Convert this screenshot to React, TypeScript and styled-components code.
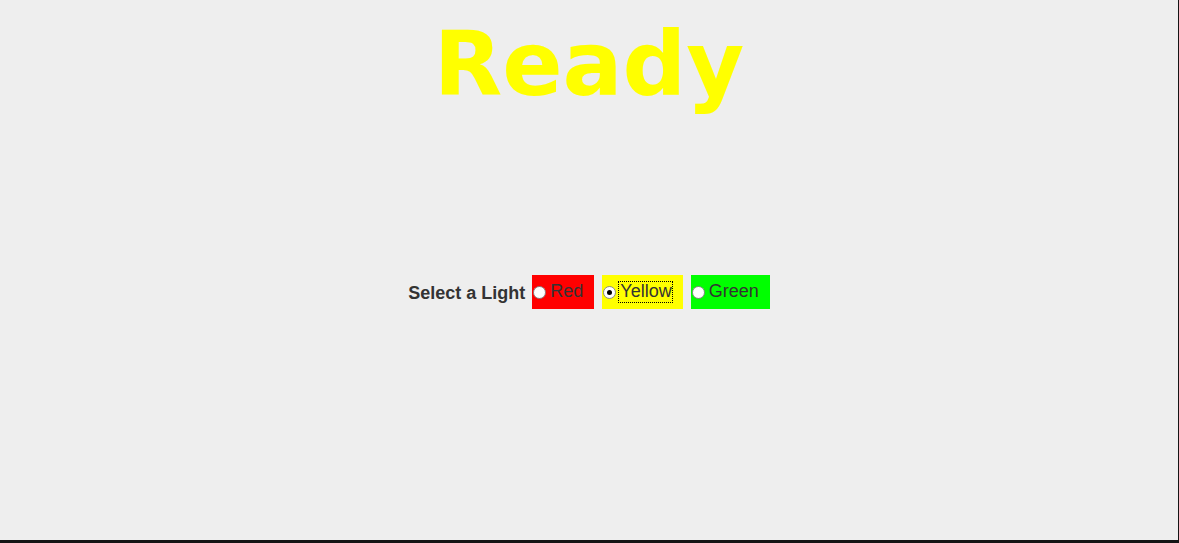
import React, { useState } from "react";
import styled, { createGlobalStyle } from "styled-components";

const Global = createGlobalStyle`
  html, body { margin: 0; padding: 0; background: #eeeeee; }
  #root { width: 1179px; height: 543px; }
`;

const Frame = styled.div`
  box-sizing: border-box;
  width: 1179px;
  height: 543px;
  background: #eeeeee;
  border-right: 1px solid #141414;
  border-bottom: 3px solid #141414;
  display: flex;
  flex-direction: column;
  align-items: center;
`;

const Title = styled.h1`
  margin: 20px 0 0 0;
  font-family: "DejaVu Sans", sans-serif;
  font-weight: bold;
  font-size: 89px;
  line-height: 89px;
  color: #ffff00;
`;

const Controls = styled.div`
  margin-top: 166px;
  display: flex;
  align-items: center;
  font-family: "Liberation Sans", Arial, sans-serif;
  font-size: 18px;
  color: #333333;
`;

const Caption = styled.span`
  font-weight: bold;
  margin-right: 7px;
  padding-top: 2px;
`;

const Choice = styled.label<{ $bg: string }>`
  box-sizing: border-box;
  height: 34px;
  display: inline-flex;
  align-items: center;
  padding: 0 10px 0 1px;
  margin-right: 8px;
  background: ${(p) => p.$bg};
  cursor: default;
  &:last-child { margin-right: 0; }
`;

const Dot = styled.span<{ $on: boolean }>`
  box-sizing: border-box;
  width: 13px;
  height: 13px;
  border-radius: 50%;
  border: 1px solid #8a8a8a;
  background: radial-gradient(circle at 40% 40%, #ffffff 60%, #e4e4e4 100%);
  display: inline-flex;
  align-items: center;
  justify-content: center;
  margin-right: 2px;
  &::after {
    content: "";
    width: 5px;
    height: 5px;
    border-radius: 50%;
    background: ${(p) => (p.$on ? "#000000" : "transparent")};
  }
`;

const Text = styled.span<{ $focus: boolean }>`
  padding: 0 0 1px 1px;
  border: 1px dotted ${(p) => (p.$focus ? "#000000" : "transparent")};
  line-height: 19px;
`;

const lights = [
  { name: "Red", bg: "#ff0000" },
  { name: "Yellow", bg: "#ffff00" },
  { name: "Green", bg: "#00ff00" },
];

export default function App() {
  const [sel, setSel] = useState("Yellow");
  return (
    <>
      <Global />
      <Frame>
        <Title>Ready</Title>
        <Controls>
          <Caption>Select a Light</Caption>
          {lights.map((l) => (
            <Choice key={l.name} $bg={l.bg} onClick={() => setSel(l.name)}>
              <Dot $on={sel === l.name} />
              <Text $focus={sel === l.name}>{l.name}</Text>
            </Choice>
          ))}
        </Controls>
      </Frame>
    </>
  );
}
